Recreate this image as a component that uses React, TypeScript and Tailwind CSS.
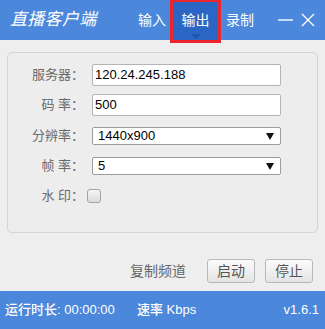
const FONT = { fontFamily: '"Liberation Sans", "Noto Sans CJK SC", sans-serif' };

function Caret() {
  return (
    <svg width="8" height="7" viewBox="0 0 8 7" className="shrink-0">
      <path d="M0 0h8L4 7z" fill="#111" />
    </svg>
  );
}

function Label({ text }: { text: string }) {
  return (
    <div className="w-[76px] shrink-0 text-right text-[13px] text-[#6a6a6a]">{text}</div>
  );
}

export default function App() {
  return (
    <div
      className="flex h-[329px] w-[325px] flex-col overflow-hidden bg-[#eeeeee]"
      style={FONT}
    >
      {/* Header — title, tabs, window controls */}
      <div className="relative flex h-[40px] shrink-0 items-center bg-[#4b87da] text-white">
        <div className="ml-[10px] w-[121px] text-[17px] italic tracking-[0.3px]">直播客户端</div>
        <div className="flex h-full text-[14px]">
          <div className="flex w-[42px] items-center justify-center">输入</div>
          <div className="relative flex w-[45px] items-center justify-center bg-[#2b66c4]">
            输出
            <div className="
              absolute bottom-[1px] left-1/2 h-0 w-0 -translate-x-1/2 border-x-[5px]
              border-t-[5px] border-x-transparent border-t-[#1f55ad]
            " />
          </div>
          <div className="flex w-[44px] items-center justify-center">录制</div>
        </div>
        <svg width="15" height="2" viewBox="0 0 15 2" className="ml-[16px]">
          <path d="M0 1h15" stroke="#fff" strokeWidth="1.4" />
        </svg>
        <svg width="14" height="14" viewBox="0 0 14 14" className="ml-[8px]">
          <path d="M1 1l12 12M13 1L1 13" stroke="#fff" strokeWidth="1.4" />
        </svg>
        {/* red highlight box over the active tab */}
        <div className="absolute left-[170px] top-[-1px] h-[44px] w-[51px] border-[3px] border-[#ec262c]" />
      </div>

      {/* Settings panel */}
      <div className="px-[7px] pt-[12px]">
        <div className="flex h-[181px] flex-col rounded-[5px] border border-[#d5d5d5] bg-[#ededed] pt-[7px]">
          <div className="flex h-[30px] items-center">
            <Label text="服务器：" />
            <div className="
              ml-[8px] flex h-[22px] w-[189px] items-center rounded-[2px] border
              border-[#b4b4b4] bg-white pl-[2px] text-[13px] text-black
            ">120.24.245.188</div>
          </div>
          <div className="flex h-[30px] items-center">
            <Label text="码 率：" />
            <div className="
              ml-[8px] flex h-[22px] w-[189px] items-center rounded-[2px] border
              border-[#b4b4b4] bg-white pl-[2px] text-[13px] text-black
            ">500</div>
          </div>
          <div className="mt-[1px] flex h-[30px] items-center">
            <Label text="分辨率：" />
            <div className="
              ml-[8px] flex h-[18px] w-[189px] items-center justify-between rounded-[2px]
              border border-[#9c9c9c] bg-white pr-[6px] pl-[5px] text-[13px] text-black
            ">
              <span>1440x900</span>
              <Caret />
            </div>
          </div>
          <div className="flex h-[30px] items-center">
            <Label text="帧 率：" />
            <div className="
              ml-[8px] flex h-[18px] w-[189px] items-center justify-between rounded-[2px]
              border border-[#9c9c9c] bg-white pr-[6px] pl-[5px] text-[13px] text-black
            ">
              <span>5</span>
              <Caret />
            </div>
          </div>
          <div className="flex h-[30px] items-center">
            <Label text="水 印：" />
            <div className="
              ml-[3px] h-[14px] w-[14px] rounded-[3px] border border-[#a3a3a3]
              bg-gradient-to-b from-[#f5f5f5] to-[#dcdcdc]
            " />
          </div>
        </div>
      </div>

      {/* Actions */}
      <div className="mt-[26px] flex h-[24px] items-center justify-end pr-[12px] text-[14px] text-[#666]">
        <span className="mr-[21px]">复制频道</span>
        <button className="
          h-[24px] w-[48px] rounded-[3px] border border-[#b8b8b8] bg-gradient-to-b
          from-[#fbfbfb] to-[#e4e4e4] text-[14px] text-[#555]
        ">启动</button>
        <button className="
          ml-[10px] h-[24px] w-[48px] rounded-[3px] border border-[#b8b8b8]
          bg-gradient-to-b from-[#fbfbfb] to-[#e4e4e4] text-[14px] text-[#555]
        ">停止</button>
      </div>

      {/* Status bar */}
      <div className="mt-auto flex h-[38px] shrink-0 items-center bg-[#4b87da] text-[13px] font-medium text-white">
        <span className="ml-[5px] w-[132px]">运行时长: 00:00:00</span>
        <span>速率 Kbps</span>
        <span className="mr-[6px] ml-auto">v1.6.1</span>
      </div>
    </div>
  );
}
